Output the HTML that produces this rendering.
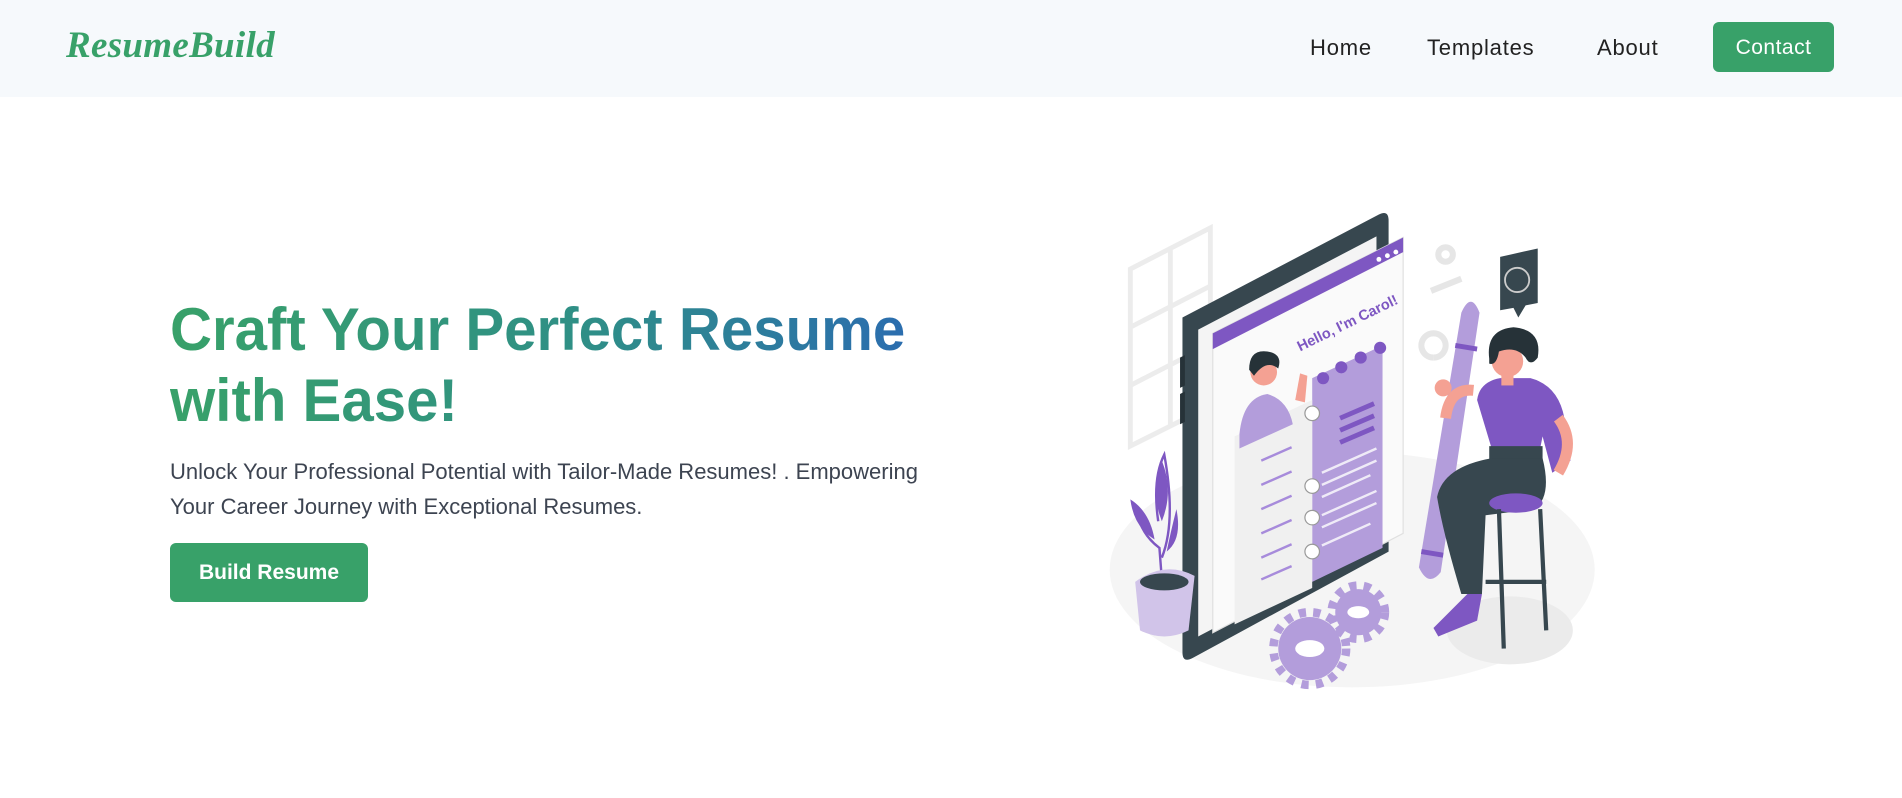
<!DOCTYPE html>
<html><head><meta charset="utf-8"><style>
html,body{margin:0;padding:0;width:1902px;height:798px;overflow:hidden;background:#fff;font-family:"Liberation Sans",sans-serif}
.hdr{position:absolute;left:0;top:0;width:1902px;height:97px;background:#f6f9fc}
.logo{position:absolute;left:66px;top:24px;font-family:"Liberation Serif",serif;font-style:italic;font-weight:bold;font-size:37px;color:#38a169;letter-spacing:0.3px}
.nav{position:absolute;top:35px;font-size:22px;color:#222;letter-spacing:0.8px}
.btnc{position:absolute;left:1713px;top:22px;width:121px;height:50px;background:#38a169;border-radius:6px;color:#fff;font-size:21px;text-align:center;line-height:52px;letter-spacing:0.5px}
h1{position:absolute;left:170px;top:294px;margin:0;font-size:60px;line-height:71px;font-weight:bold;transform:scaleX(0.97);transform-origin:left top;white-space:nowrap;background:linear-gradient(90deg,#38a169 0%,#2f8f86 55%,#2b6cb0 100%);-webkit-background-clip:text;background-clip:text;color:transparent;width:770px}
p{position:absolute;left:170px;top:454px;margin:0;font-size:22px;line-height:35px;color:#3d4451;width:770px}
.bb{position:absolute;left:170px;top:543px;width:198px;height:59px;background:#38a169;border-radius:6px;color:#fff;font-weight:bold;font-size:21px;text-align:center;line-height:59px}
svg{position:absolute;left:1106px;top:206px}
</style></head><body>
<div class="hdr">
<div class="logo">ResumeBuild</div>
<div class="nav" style="left:1310px">Home</div>
<div class="nav" style="left:1427px">Templates</div>
<div class="nav" style="left:1597px">About</div>
<div class="btnc">Contact</div>
</div>
<h1>Craft Your Perfect Resume<br>with Ease!</h1>
<p>Unlock Your Professional Potential with Tailor-Made Resumes! . Empowering Your Career Journey with Exceptional Resumes.</p>
<div class="bb">Build Resume</div>
<svg width="490" height="485" viewBox="912 170 404 400">
<ellipse cx="1115" cy="470" rx="200" ry="97" fill="#f5f5f5"/>
<ellipse cx="1245" cy="520" rx="52" ry="28" fill="#ebebeb"/>
<g fill="none" stroke="#ececec" stroke-width="4">
<path d="M932 222 L998 188 L998 335 L932 368 Z M965 205 L965 352 M932 270 L998 236 M932 318 L998 284"/>
</g>
<path d="M975 262 L1137 177 Q1145 173 1145 182 L1145 455 L983 543 Q975 547 975 538 Z" fill="#37474f"/>
<path d="M988 272 L1135 195 L1135 448 L988 525 Z" fill="#f4f4f4"/>
<path d="M973 295 l4 -2 v25 l-4 2z M973 325 l4 -2 v25 l-4 2z" fill="#263238"/>
<path d="M1000 275 L1157 196 L1157 440 L1000 522 Z" fill="#fafafa" stroke="#e0e0e0"/>
<path d="M1000 275 L1157 196 L1157 208 L1000 288 Z" fill="#7e57c2"/>
<circle cx="1137" cy="214" r="2" fill="#fff"/><circle cx="1144" cy="211" r="2" fill="#fff"/><circle cx="1151" cy="208" r="2" fill="#fff"/>
<path d="M1082 312 L1140 285 L1140 452 L1082 480 Z" fill="#b39ddb"/>
<path d="M1018 360 L1082 330 L1082 485 L1018 515 Z" fill="#f0f0f0"/>
<text x="1072" y="290" transform="rotate(-26 1072 290)" font-size="12" font-weight="bold" fill="#7e57c2" font-family="Liberation Sans,sans-serif">Hello, I'm Carol!</text>
<g fill="#7e57c2"><circle cx="1091" cy="312" r="5"/><circle cx="1106" cy="303" r="5"/><circle cx="1122" cy="295" r="5"/><circle cx="1138" cy="287" r="5"/></g>
<g stroke="#7e57c2" stroke-width="4"><path d="M1105 345 l28 -12 M1105 355 l28 -12 M1105 365 l28 -12"/></g>
<g stroke="#ffffff" stroke-width="2" opacity=".8"><path d="M1090 390 l45 -20 M1090 400 l45 -20 M1090 410 l40 -18 M1090 425 l45 -20 M1090 435 l45 -20 M1090 450 l40 -18"/></g>
<g stroke="#a78bdb" stroke-width="2"><path d="M1040 380 l25 -11 M1040 400 l25 -11 M1040 420 l25 -11 M1040 440 l25 -11 M1040 460 l25 -11 M1040 478 l25 -11"/></g>
<g fill="#fff" stroke="#999"><circle cx="1082" cy="341" r="6"/><circle cx="1082" cy="401" r="6"/><circle cx="1082" cy="427" r="6"/><circle cx="1082" cy="455" r="6"/></g>
<path d="M1022 358 Q1025 328 1045 325 Q1062 330 1066 350 L1022 370Z" fill="#b39ddb"/>
<circle cx="1042" cy="307" r="11" fill="#f4a193"/>
<path d="M1030 305 Q1030 288 1045 290 Q1058 292 1054 304 Q1044 296 1034 310 Z" fill="#263238"/>
<path d="M1068 330 l4 -22 l6 2 l-2 22z" fill="#f4a193"/>
<path d="M1170 468 L1205 258 Q1213 240 1220 258 L1188 472 Q1178 485 1170 468 Z" fill="#b39ddb"/>
<path d="M1172 455 l18 3 M1200 285 l18 3" stroke="#7e57c2" stroke-width="4"/>
<path d="M1237 212 L1268 205 L1268 250 L1258 252 L1252 262 L1248 254 L1237 256 Z" fill="#37474f"/>
<circle cx="1251" cy="231" r="10" fill="none" stroke="#ccc" stroke-width="1.5"/>
<g fill="none" stroke="#e6e6e6" stroke-width="5"><circle cx="1192" cy="210" r="6"/><path d="M1180 240 l25 -10 M1182 295 a10 10 0 1 1 0.1 0"/></g>
<path d="M1218 330 Q1220 315 1237 312 L1262 312 Q1285 318 1290 345 L1295 380 L1280 390 L1272 360 L1270 370 L1230 370 Z" fill="#7e57c2"/>
<path d="M1228 368 L1272 368 L1272 380 L1228 380 Z" fill="#37474f"/>
<path d="M1230 378 L1272 378 Q1280 410 1265 420 L1225 425 L1222 490 L1205 490 Q1190 440 1185 410 Q1190 385 1230 378 Z" fill="#37474f"/>
<ellipse cx="1250" cy="415" rx="22" ry="8" fill="#7e57c2"/>
<g stroke="#37474f" stroke-width="3.5"><path d="M1236 420 L1240 535 M1270 420 L1275 520 M1225 480 L1275 480"/></g>
<path d="M1210 490 L1222 490 L1218 512 L1186 525 L1182 518 Z" fill="#7e57c2"/>
<path d="M1215 322 Q1195 320 1192 345" stroke="#f4a193" stroke-width="9" fill="none"/>
<circle cx="1190" cy="320" r="7" fill="#f4a193"/>
<path d="M1285 345 Q1300 365 1285 390" stroke="#f4a193" stroke-width="9" fill="none"/>
<circle cx="1243" cy="298" r="13" fill="#f4a193"/>
<path d="M1228 296 Q1225 272 1248 270 Q1272 272 1268 295 Q1262 303 1258 295 Q1250 285 1236 290 Q1234 302 1228 300Z" fill="#263238"/>
<rect x="1238" y="308" width="10" height="10" fill="#f4a193"/>
<path d="M937 420 Q940 440 956 452 L958 478 M958 460 Q970 430 960 375 Q950 395 955 430" fill="none" stroke="#7e57c2" stroke-width="2"/>
<path d="M958 380 Q948 405 958 430 Q968 405 958 380 Z M932 412 Q935 435 952 445 Q948 422 932 412 Z M970 420 Q965 440 962 455 Q975 445 970 420Z" fill="#7e57c2"/>
<path d="M936 480 Q960 462 985 475 L980 520 Q960 530 940 520 Z" fill="#d1c4e9"/>
<ellipse cx="960" cy="480" rx="20" ry="7" fill="#37474f"/>
<g fill="#b39ddb"><circle cx="1080" cy="535" r="26"/><circle cx="1120" cy="505" r="19"/></g>
<g fill="none" stroke="#b39ddb" stroke-width="7" stroke-dasharray="6 6"><circle cx="1080" cy="535" r="30"/><circle cx="1120" cy="505" r="22"/></g>
<ellipse cx="1080" cy="535" rx="12" ry="7" fill="#fff"/>
<ellipse cx="1120" cy="505" rx="9" ry="5" fill="#fff"/>
</svg>
</body></html>
